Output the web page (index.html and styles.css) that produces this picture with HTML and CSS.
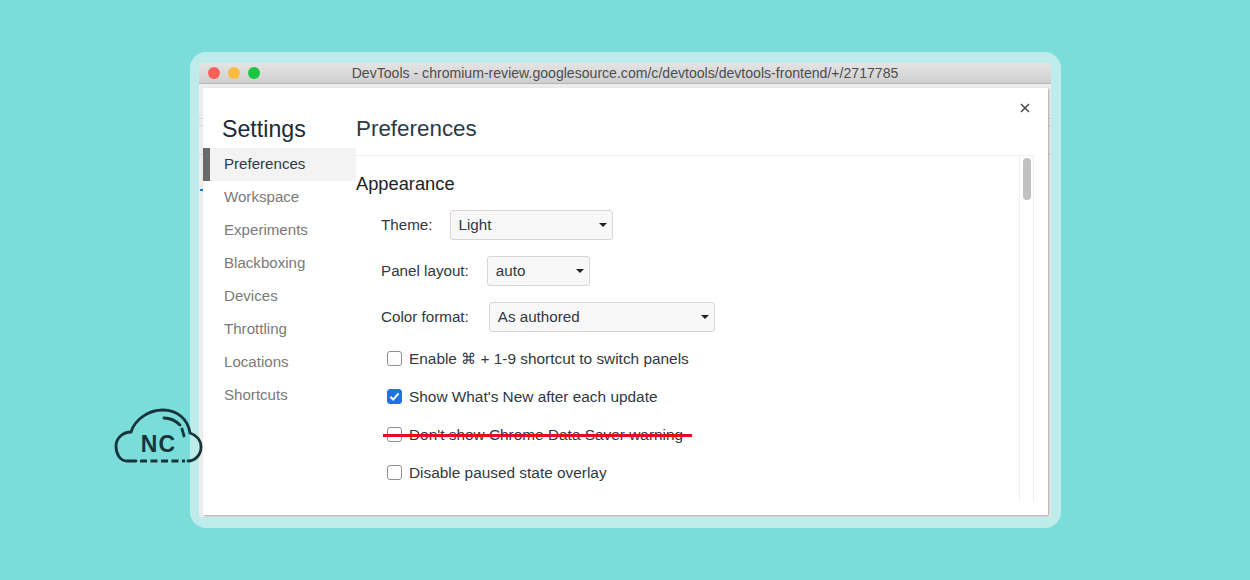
FILE: index.html
```html
<!DOCTYPE html>
<html lang="en">
<head>
<meta charset="utf-8">
<title>DevTools Settings</title>
<link rel="stylesheet" href="styles.css">
</head>
<body>
<div class="stage">
  <div class="frame">
    <div class="window">
      <div class="titlebar">
        <div class="lights">
          <span class="light red"></span>
          <span class="light yellow"></span>
          <span class="light green"></span>
        </div>
        <div class="title">DevTools - chromium-review.googlesource.com/c/devtools/devtools-frontend/+/2717785</div>
      </div>
      <div class="backdrop">
        <span class="blue-tick"></span>
        <div class="dialog">
          <aside class="sidebar">
            <h1 class="settings-title">Settings</h1>
            <nav class="nav">
              <a class="nav-item active">Preferences</a>
              <a class="nav-item">Workspace</a>
              <a class="nav-item">Experiments</a>
              <a class="nav-item">Blackboxing</a>
              <a class="nav-item">Devices</a>
              <a class="nav-item">Throttling</a>
              <a class="nav-item">Locations</a>
              <a class="nav-item">Shortcuts</a>
            </nav>
          </aside>
          <main class="main">
            <div class="close-row">
              <svg class="close" width="10" height="10" viewBox="0 0 10 10"><path d="M1 1 9 9M9 1 1 9"/></svg>
            </div>
            <h2 class="page-title">Preferences</h2>
            <div class="panel">
              <div class="content">
                <h3 class="section">Appearance</h3>
                <div class="field">
                  <span class="field-label">Theme:</span>
                  <div class="select w-theme"><span>Light</span><i class="caret"></i></div>
                </div>
                <div class="field">
                  <span class="field-label">Panel layout:</span>
                  <div class="select w-panel"><span>auto</span><i class="caret"></i></div>
                </div>
                <div class="field">
                  <span class="field-label">Color format:</span>
                  <div class="select w-color"><span>As authored</span><i class="caret"></i></div>
                </div>
                <div class="checks">
                  <div class="check-row"><span class="box"></span><span class="check-text">Enable ⌘ + 1-9 shortcut to switch panels</span></div>
                  <div class="check-row"><span class="box checked"><svg width="15" height="15" viewBox="0 0 15 15"><path d="M3.4 7.8 6.2 10.6 11.6 4.4"/></svg></span><span class="check-text">Show What's New after each update</span></div>
                  <div class="check-row"><span class="box"></span><span class="check-text">Don't show Chrome Data Saver warning</span><span class="strike"></span></div>
                  <div class="check-row"><span class="box"></span><span class="check-text">Disable paused state overlay</span></div>
                </div>
              </div>
              <div class="scrolltrack"><span class="thumb"></span></div>
            </div>
          </main>
        </div>
      </div>
    </div>
  </div>
  <svg class="cloud" width="90" height="58" viewBox="0 0 90 58">
    <path class="cloud-line" d="M22 54H13C6 54 2 47 2 39C2 31 9 25 17 25C21 12 35 3 49 3C63 3 74 12 76 26C82 28 87 33 87 40C87 48 81 54 74 54"/>
    <path class="cloud-line dashed" d="M26 54H71"/>
    <path class="cloud-line" d="M50 11C57 11 62 14 66 18M68 22 70 29"/>
    <text class="cloud-text" x="44.500" y="44.500" text-anchor="middle">NC</text>
  </svg>
</div>
</body>
</html>
```
FILE: styles.css
```css
* { box-sizing: border-box; }
html, body { margin: 0; padding: 0; }
body {
  width: 1250px;
  height: 580px;
  overflow: hidden;
  background: #7addd9;
  font-family: "Liberation Sans", Arial, sans-serif;
  color: #303942;
}
.stage {
  position: relative;
  height: 580px;
  padding: 52px 0 0 190px;
}
.frame {
  width: 871px;
  height: 476px;
  padding: 11px 10px 11px 9px;
  background: #bdecea;
  border-radius: 16px;
}
.window {
  height: 454px;
  display: flex;
  flex-direction: column;
  border-radius: 5px 5px 2px 2px;
  overflow: hidden;
  background: #ececec;
}
.titlebar {
  position: relative;
  flex: none;
  height: 21px;
  display: flex;
  align-items: center;
  justify-content: center;
  background: linear-gradient(#e4e4e4, #cfcfcf);
  border-bottom: 1px solid #b5b5b5;
}
.lights {
  position: absolute;
  left: 9px;
  top: 4px;
  display: flex;
  gap: 8px;
}
.light { width: 12px; height: 12px; border-radius: 50%; }
.red { background: #f9605a; }
.yellow { background: #fcbb3e; }
.green { background: #1cc640; }
.title {
  font-size: 14.080px;
  color: #4d4d4d;
  white-space: nowrap;
}
.backdrop {
  position: relative;
  flex: 1;
  min-height: 0;
  padding: 4px 3px 2px 4px;
  background-color: #ededed;
  background-image:
    linear-gradient(#d6d6d6, #d6d6d6),
    linear-gradient(#d6d6d6, #d6d6d6),
    linear-gradient(#d6d6d6, #d6d6d6);
  background-repeat: no-repeat;
  background-size: 100% 1px;
  background-position: 0 34px, 0 41px, 0 70px;
}
.blue-tick {
  position: absolute;
  left: 1px;
  top: 105px;
  width: 3px;
  height: 2px;
  background: #1a73e8;
}
.dialog {
  height: 100%;
  display: flex;
  background: #fff;
  box-shadow: 1px 1px 2px rgba(0, 0, 0, .3);
}
.sidebar {
  flex: none;
  width: 153px;
}
.settings-title {
  margin: 0;
  padding: 28px 0 0 19px;
  height: 60px;
  font-size: 23.200px;
  line-height: 26px;
  font-weight: 400;
  color: #202a33;
}
.nav { display: flex; flex-direction: column; }
.nav-item {
  height: 33px;
  display: flex;
  align-items: center;
  padding-left: 21px;
  padding-bottom: 2px;
  font-size: 15.100px;
  color: #7a7a7a;
}
.nav-item.active {
  color: #303942;
  background: #f3f3f3;
  border-left: 7px solid #696969;
  padding-left: 14px;
}
.main {
  flex: 1;
  min-width: 0;
  display: flex;
  flex-direction: column;
  padding-right: 14px;
}
.close-row {
  position: relative;
  height: 0;
}
.close {
  position: absolute;
  right: 4px;
  top: 15px;
}
.close path {
  fill: none;
  stroke: #4a4a4a;
  stroke-width: 1.500;
}
.page-title {
  flex: none;
  margin: 0;
  height: 68px;
  padding-top: 28px;
  font-size: 22.400px;
  line-height: 26px;
  font-weight: 400;
  color: #2b3a45;
  border-bottom: 1px solid #efefef;
}
.panel {
  height: 346px;
  display: flex;
}
.content { flex: 1; min-width: 0; }
.scrolltrack {
  flex: none;
  width: 15px;
  padding: 2px 3px 0 3px;
  border-left: 1px solid #f0f0f0;
  border-right: 1px solid #f0f0f0;
}
.thumb {
  display: block;
  width: 8px;
  height: 42px;
  border-radius: 4px;
  background: #c1c1c1;
}
.section {
  margin: 0;
  padding-top: 17px;
  height: 54px;
  font-size: 18.300px;
  line-height: 22px;
  font-weight: 400;
  color: #1c2328;
}
.field {
  display: flex;
  align-items: center;
  height: 30px;
  margin-bottom: 16px;
  padding-left: 25px;
  font-size: 15.200px;
}
.field-label { margin-right: 18px; padding-bottom: 1px; }
.select {
  height: 30px;
  display: flex;
  align-items: center;
  justify-content: space-between;
  padding: 0 5px 1px 8px;
  font-size: 15.200px;
  background: #f8f8f8;
  border: 1px solid #d6d6d6;
  border-radius: 3px;
}
.w-theme { width: 163px; margin-left: -1px; }
.w-panel { width: 103px; }
.w-color { width: 226px; margin-left: 2px; }
.caret {
  width: 0;
  height: 0;
  border-left: 4px solid transparent;
  border-right: 4px solid transparent;
  border-top: 4px solid #222;
}
.checks {
  display: flex;
  flex-direction: column;
  gap: 18px;
  padding: 16px 0 0 31px;
  margin-top: -16px;
}
.check-row {
  position: relative;
  height: 20px;
  display: flex;
  align-items: center;
  gap: 7px;
  font-size: 15.400px;
  white-space: nowrap;
}
.check-text { padding-top: 2px; }
.box {
  flex: none;
  width: 15px;
  height: 15px;
  border: 1px solid #8f8f8f;
  border-radius: 3px;
  background: #fff;
  position: relative;
}
.box.checked {
  background: #1a73e8;
  border-color: #1a73e8;
}
.box svg {
  position: absolute;
  left: -1px;
  top: -1px;
}
.box path {
  fill: none;
  stroke: #fff;
  stroke-width: 2;
}
.strike {
  position: absolute;
  left: -4px;
  top: 10px;
  width: 309px;
  height: 3px;
  background: #e9091c;
}
.cloud {
  position: absolute;
  left: 114px;
  top: 407px;
}
.cloud-line {
  fill: none;
  stroke: #17343b;
  stroke-width: 2.800;
  stroke-linecap: round;
}
.dashed { stroke-dasharray: 7 3.500; stroke-linecap: butt; }
.cloud-text {
  font-family: "Liberation Sans", Arial, sans-serif;
  font-size: 23px;
  font-weight: 700;
  letter-spacing: 1.200px;
  fill: #17343b;
}
```
